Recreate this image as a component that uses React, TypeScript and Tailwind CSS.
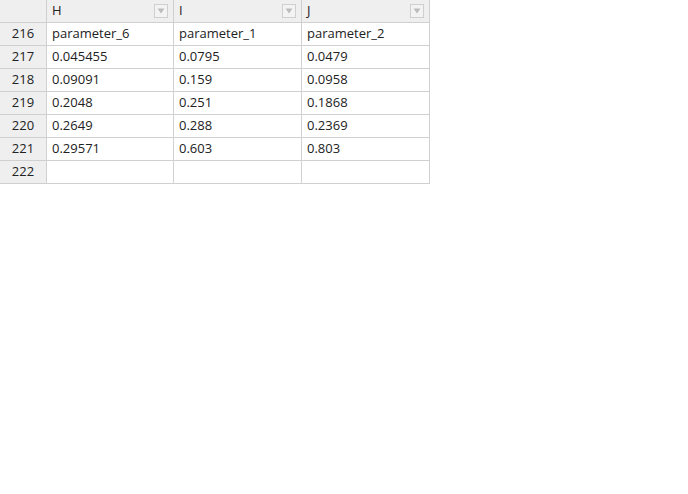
const columns = ["H", "I", "J"];
const widths = ["w-[127px]", "w-[128px]", "w-[128px]"];

const rows: { n: number; cells: string[] }[] = [
  { n: 216, cells: ["parameter_6", "parameter_1", "parameter_2"] },
  { n: 217, cells: ["0.045455", "0.0795", "0.0479"] },
  { n: 218, cells: ["0.09091", "0.159", "0.0958"] },
  { n: 219, cells: ["0.2048", "0.251", "0.1868"] },
  { n: 220, cells: ["0.2649", "0.288", "0.2369"] },
  { n: 221, cells: ["0.29571", "0.603", "0.803"] },
  { n: 222, cells: ["", "", ""] },
];

const FilterButton = () => (
  <span className="flex h-[14px] w-[14px] items-center justify-center border border-[#cfcfcf] bg-[#f3f3f3]">
    <svg width="8" height="6" viewBox="0 0 8 6">
      <path d="M0.5 0.5 H7.5 L4 5.5 Z" fill="#bdbdbd" />
    </svg>
  </span>
);

export default function App() {
  return (
    <div className="min-h-[494px] bg-white font-['Open_Sans','Noto_Sans',sans-serif] text-[13px] text-[#222]">
      <div className="flex w-[430px] flex-col">
        {/* header */}
        <div className="flex h-[23px] border-b border-[#d0d0d0] bg-[#efefef]">
          <div className="w-[47px] border-r border-[#d0d0d0]" />
          {columns.map((c, i) => (
            <div
              key={c}
              className={`${widths[i]} flex items-center justify-between border-r border-[#d0d0d0] pl-[5px] pr-[5px]`}
            >
              <span>{c}</span>
              <FilterButton />
            </div>
          ))}
        </div>

        {/* body */}
        {rows.map((r) => (
          <div key={r.n} className="flex h-[23px] border-b border-[#d0d0d0]">
            <div className="flex w-[47px] items-center justify-center border-r border-[#d0d0d0] bg-[#efefef]">
              {r.n}
            </div>
            {r.cells.map((v, i) => (
              <div
                key={i}
                className={`${widths[i]} flex items-center border-r border-[#d0d0d0] pl-[5px]`}
              >
                {v}
              </div>
            ))}
          </div>
        ))}
      </div>
    </div>
  );
}
